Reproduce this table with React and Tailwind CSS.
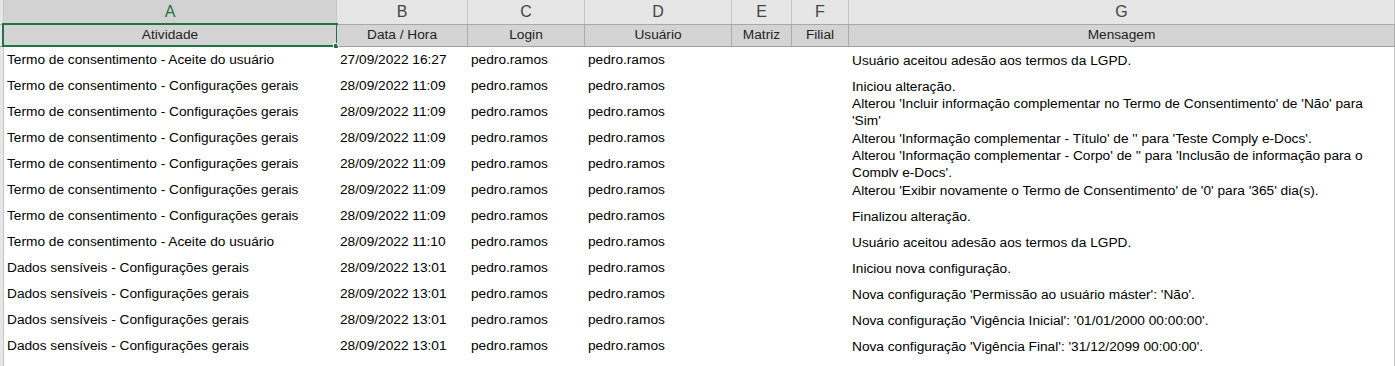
import React from "react";

const cols = [
  { key: "A", w: "w-[333px]" },
  { key: "B", w: "w-[131px]" },
  { key: "C", w: "w-[117px]" },
  { key: "D", w: "w-[147px]" },
  { key: "E", w: "w-[60px]" },
  { key: "F", w: "w-[57px]" },
  { key: "G", w: "w-[546px]" },
];

const titles = ["Atividade", "Data / Hora", "Login", "Usuário", "Matriz", "Filial", "Mensagem"];

const termo = "Termo de consentimento - Configurações gerais";
const dados = "Dados sensíveis - Configurações gerais";

const rows = [
  ["Termo de consentimento - Aceite do usuário", "27/09/2022 16:27", ["Usuário aceitou adesão aos termos da LGPD."]],
  [termo, "28/09/2022 11:09", ["Iniciou alteração."]],
  [termo, "28/09/2022 11:09", ["Alterou 'Incluir informação complementar no Termo de Consentimento' de 'Não' para", "'Sim'"]],
  [termo, "28/09/2022 11:09", ["Alterou 'Informação complementar - Título' de '' para 'Teste Comply e-Docs'."]],
  [termo, "28/09/2022 11:09", ["Alterou 'Informação complementar - Corpo' de '' para 'Inclusão de informação para o", "Comply e-Docs'."]],
  [termo, "28/09/2022 11:09", ["Alterou 'Exibir novamente o Termo de Consentimento' de '0' para '365' dia(s)."]],
  [termo, "28/09/2022 11:09", ["Finalizou alteração."]],
  ["Termo de consentimento - Aceite do usuário", "28/09/2022 11:10", ["Usuário aceitou adesão aos termos da LGPD."]],
  [dados, "28/09/2022 13:01", ["Iniciou nova configuração."]],
  [dados, "28/09/2022 13:01", ["Nova configuração 'Permissão ao usuário máster': 'Não'."]],
  [dados, "28/09/2022 13:01", ["Nova configuração 'Vigência Inicial': '01/01/2000 00:00:00'."]],
  [dados, "28/09/2022 13:01", ["Nova configuração 'Vigência Final': '31/12/2099 00:00:00'."]],
  [dados, "28/09/2022 13:01", ["Nova configuração 'Vigência Final': '31/12/2099 00:00:00'."]],
];

function Cell({ w, children }) {
  return (
    <div className={`${w} h-full shrink-0 overflow-hidden flex items-center pl-[3px] whitespace-nowrap`}>
      {children}
    </div>
  );
}

export default function App() {
  return (
    <div className="w-[1395px] h-[366px] overflow-hidden bg-white text-black font-['Liberation_Sans',Arial,sans-serif]">
      {/* column letters */}
      <div className="flex h-[25px] bg-[#e6e6e6] border-b border-[#a9a9a9] text-[16px] text-[#444]">
        <div className="w-[4px] shrink-0 border-r border-[#c6c6c6]" />
        {cols.map((c, i) => (
          <div
            key={c.key}
            className={`${c.w} shrink-0 flex items-center justify-center border-r border-[#c6c6c6] ${
              i === 0 ? "bg-[#d2d2d2] text-[#217346]" : ""
            }`}
          >
            {c.key}
          </div>
        ))}
      </div>

      {/* header row */}
      <div className="flex h-[22px] border-b border-[#a0a0a0] text-[13.7px] text-[#222]">
        <div className="w-[4px] shrink-0 bg-[#e6e6e6] border-r border-[#c6c6c6]" />
        {cols.map((c, i) => (
          <div
            key={c.key}
            className={`${c.w} shrink-0 relative flex items-center justify-center bg-[#d4d4d4] border-r border-[#ababab] whitespace-nowrap`}
          >
            {titles[i]}
            {i === 0 && (
              <>
                <div className="absolute left-[-2px] right-[-2px] top-[-2px] bottom-[-1px] border-2 border-[#217346]" />
                <div className="absolute right-[-3px] bottom-[-3px] w-[6px] h-[6px] bg-[#217346] border border-white" />
              </>
            )}
          </div>
        ))}
      </div>

      {/* data */}
      {rows.map((r, idx) => (
        <div key={idx} className="flex h-[26px] text-[13.7px]">
          <div className="w-[4px] shrink-0 bg-[#e6e6e6] border-r border-[#c6c6c6]" />
          <Cell w="w-[333px]">{r[0]}</Cell>
          <Cell w="w-[131px]">{r[1]}</Cell>
          <Cell w="w-[117px]">pedro.ramos</Cell>
          <Cell w="w-[147px]">pedro.ramos</Cell>
          <Cell w="w-[60px]" />
          <Cell w="w-[57px]" />
          <div className="w-[546px] h-full shrink-0 overflow-hidden flex items-center pl-[3px] border-r border-[#c6c6c6]">
            <div className="leading-[17px] whitespace-nowrap">
              {r[2].map((l, j) => (
                <div key={j}>{l}</div>
              ))}
            </div>
          </div>
        </div>
      ))}
    </div>
  );
}
